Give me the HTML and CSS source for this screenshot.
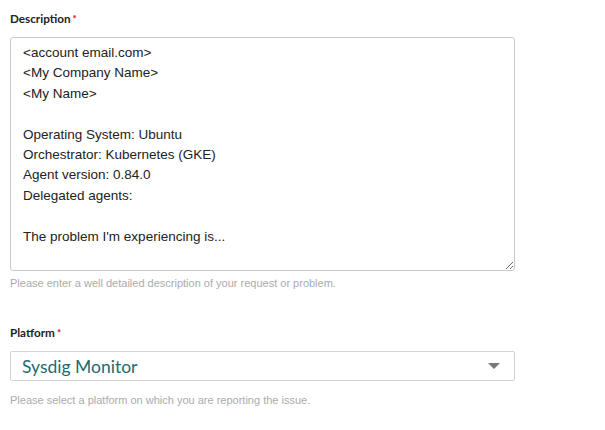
FILE: index.html
```html
<!DOCTYPE html>
<html>
<head>
<meta charset="utf-8">
<link rel="stylesheet" href="styles.css">
</head>
<body>
<div class="form">
  <div class="field">
    <label class="label">Description<span class="req">*</span></label>
    <textarea class="textarea"><account email.com>
<My Company Name>
<My Name>

Operating System: Ubuntu
Orchestrator: Kubernetes (GKE)
Agent version: 0.84.0
Delegated agents:

The problem I'm experiencing is...</textarea>
    <p class="hint">Please enter a well detailed description of your request or problem.</p>
  </div>
  <div class="field field-platform">
    <label class="label">Platform<span class="req">*</span></label>
    <div class="select">
      <span class="select-value">Sysdig Monitor</span>
      <span class="caret"></span>
    </div>
    <p class="hint">Please select a platform on which you are reporting the issue.</p>
  </div>
</div>
</body>
</html>
```
FILE: styles.css
```css
html, body {
  margin: 0;
  padding: 0;
  background: #fff;
}
.form {
  padding: 10px 10px 0 10px;
  width: 505px;
  font-family: "Liberation Sans", Arial, sans-serif;
}
.field {
  display: flex;
  flex-direction: column;
}
.field-platform {
  margin-top: 34px;
}
.label {
  font-family: Lato, "Liberation Sans", sans-serif;
  font-weight: 700;
  font-size: 11.7px;
  line-height: 16px;
  color: #222;
  margin-bottom: 11px;
}
.req {
  color: #e0001b;
  margin-left: 2px;
  font-size: 10px;
  vertical-align: 1px;
}
.textarea {
  box-sizing: border-box;
  width: 505px;
  height: 234px;
  margin: 0;
  padding: 5px 12px;
  border: 1px solid #c9c9c9;
  border-radius: 3px;
  font-family: "Liberation Sans", Arial, sans-serif;
  font-size: 13.5px;
  line-height: 20.4px;
  color: #222;
  resize: vertical;
  outline: none;
}
.hint {
  margin: 5px 0 0 0;
  font-size: 11px;
  line-height: 14px;
  color: #ababab;
}
.select {
  box-sizing: border-box;
  width: 505px;
  height: 30px;
  border: 1px solid #d3d3d3;
  border-radius: 2px;
  display: flex;
  align-items: center;
  justify-content: space-between;
  padding: 0 14px 0 11px;
}
.select-value {
  font-family: Lato, "Liberation Sans", sans-serif;
  font-size: 17.5px;
  color: #1d6b72;
}
.caret {
  width: 0;
  height: 0;
  border-left: 6px solid transparent;
  border-right: 6px solid transparent;
  border-top: 6px solid #777;
}
.field-platform .hint {
  margin-top: 12px;
}
```
